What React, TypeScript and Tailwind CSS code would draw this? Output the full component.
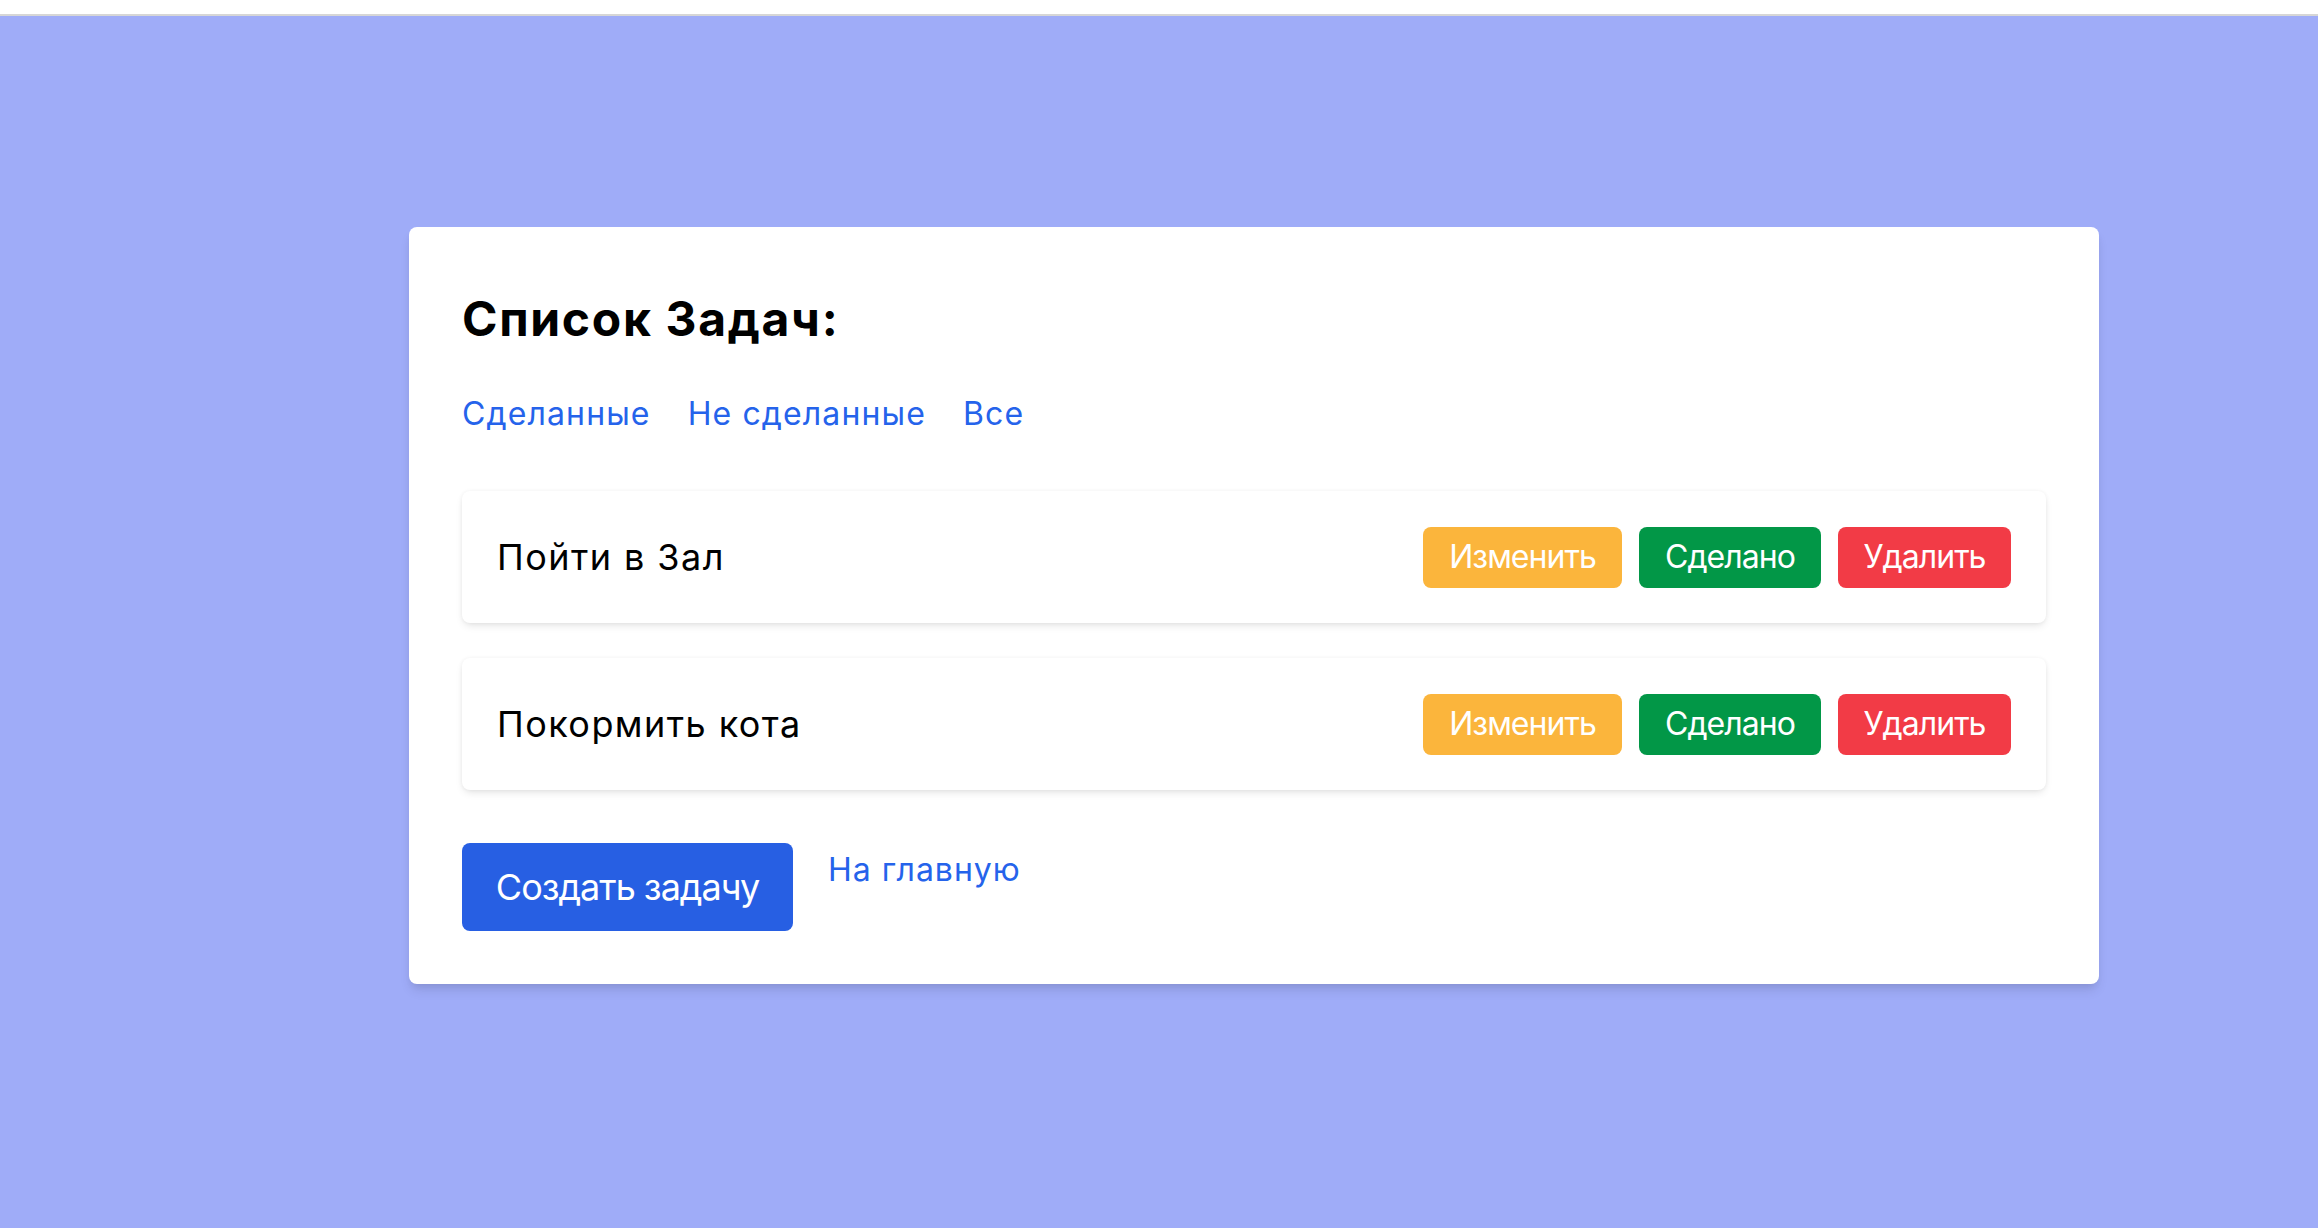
import React from 'react';

const tasks = ['Пойти в Зал', 'Покормить кота'];

const TaskRow = ({ title }: { title: string }) => {
  return (
    <div className="flex items-center justify-between h-[132px] pl-[35px] pr-[35px] bg-white rounded-[8px] shadow-[0_4px_8px_-2px_rgba(0,0,0,0.12),0_0_4px_rgba(0,0,0,0.05)]">
      <span className="text-[36px] leading-[48px] tracking-[0.04em] text-black">{title}</span>
      <div className="flex items-center gap-[17px]">
        <button className="w-[199px] h-[61px] rounded-[8px] bg-[#fbb53c] text-white text-[32px] leading-[48px] tracking-[-0.03em]">
          Изменить
        </button>
        <button className="w-[182px] h-[61px] rounded-[8px] bg-[#029747] text-white text-[32px] leading-[48px] tracking-[-0.03em]">
          Сделано
        </button>
        <button className="w-[173px] h-[61px] rounded-[8px] bg-[#f23b46] text-white text-[32px] leading-[48px] tracking-[-0.03em]">
          Удалить
        </button>
      </div>
    </div>
  );
};

export default function App() {
  return (
    <div className="min-h-screen bg-white font-['Inter','Liberation_Sans',sans-serif]">
      <div className="h-[16px] bg-white border-b-2 border-[#d6d6d6]" />
      <div className="h-[1212px] bg-[#9facf8] pt-[211px] pl-[409px]">
        <div className="w-[1690px] bg-white rounded-[8px] p-[53px] shadow-[0_8px_12px_-2px_rgba(0,0,0,0.1),0_4px_8px_-4px_rgba(0,0,0,0.1)]">
          <h1 className="mt-[7px] text-[48px] leading-[64px] font-bold tracking-[0.035em] text-black">Список Задач:</h1>

          <div className="flex gap-[37px] mt-[39px] text-[32px] leading-[48px] tracking-[0.035em] text-[#2563eb]">
            <a href="#done">Сделанные</a>
            <a href="#undone">Не сделанные</a>
            <a href="#all">Все</a>
          </div>

          <div className="flex flex-col gap-[35px] mt-[53px]">
            {tasks.map((t) => (
              <TaskRow key={t} title={t} />
            ))}
          </div>

          <div className="flex items-start gap-[35px] mt-[53px]">
            <button className="w-[331px] h-[88px] rounded-[8px] bg-[#275fe3] text-white text-[36px] leading-[48px] tracking-[-0.028em]">
              Создать задачу
            </button>
            <a href="#home" className="text-[32px] leading-[48px] tracking-[0.03em] text-[#2563eb] mt-[3px]">
              На главную
            </a>
          </div>
        </div>
      </div>
    </div>
  );
}
